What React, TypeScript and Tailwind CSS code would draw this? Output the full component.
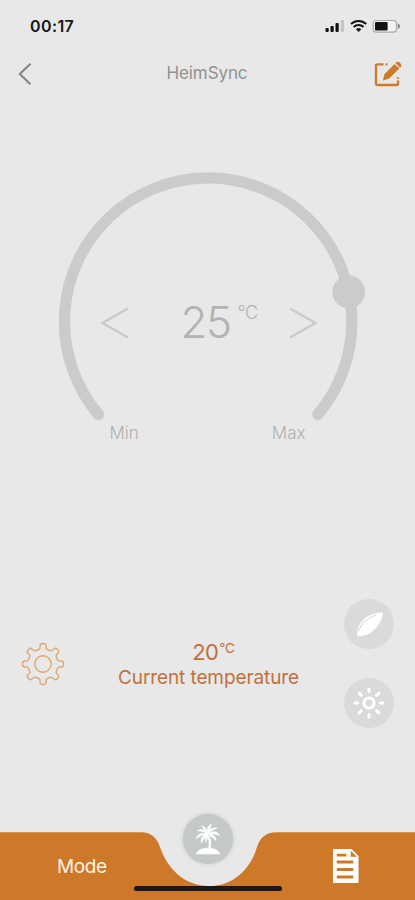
import type { ReactNode } from 'react'

const TEETH = 8

// closed outline through the midpoints of polar points, so every corner is rounded
function gearPath() {
  const pts: number[][] = []
  for (let i = 0; i < TEETH; i++) {
    const base = i * 45
    const corners = [[-15, 15.2], [-10, 16], [-8.5, 20.8], [8.5, 20.8], [10, 16], [15, 15.2]]
    corners.forEach(([a, r]) => {
      const t = ((base + a) * Math.PI) / 180
      pts.push([22 + r * Math.sin(t), 22 - r * Math.cos(t)])
    })
  }
  const mid = (a: number[], b: number[]) => `${((a[0] + b[0]) / 2).toFixed(2)} ${((a[1] + b[1]) / 2).toFixed(2)}`
  let d = `M${mid(pts[pts.length - 1], pts[0])}`
  pts.forEach((p, i) => {
    d += `Q${p[0].toFixed(2)} ${p[1].toFixed(2)} ${mid(p, pts[(i + 1) % pts.length])}`
  })
  return d + 'Z'
}

function StatusBar() {
  return (
    <div className="flex h-[52px] items-center justify-between pl-[30px] pr-[14px]">
      <span className="text-[16px] font-semibold tracking-[0.4px] text-[#171717]">00:17</span>
      <svg width="76" height="16" viewBox="0 0 76 16" className="block">
        <g fill="#111">
          <rect x="0.5" y="10" width="3.2" height="4" rx="1" />
          <rect x="5.5" y="8" width="3.2" height="6" rx="1" />
          <rect x="10.5" y="5" width="3.2" height="9" rx="1" />
          <rect x="15.7" y="2" width="3.2" height="12" rx="1" fill="#c4c4c4" />
        </g>
        <g fill="none" stroke="#111" strokeWidth="2.1">
          <path d="M26 6.1a11 11 0 0 1 15.2 0" />
          <path d="M28.7 9a7 7 0 0 1 9.8 0" />
        </g>
        <path d="M30.9 11.2a4 4 0 0 1 5.4 0L33.6 14z" fill="#111" />
        <rect x="48.2" y="2.5" width="23.3" height="11.6" rx="3" fill="#f3f3f3" stroke="#aaa" strokeWidth="1.2" />
        <rect x="50" y="4.1" width="12.6" height="8.4" rx="1.2" fill="#111" />
        <path d="M72.8 5.6v5.4c3-1 3-4.4 0-5.4z" fill="#888" />
      </svg>
    </div>
  )
}

function Header() {
  return (
    <header className="flex h-11 items-center justify-between pl-[18px] pr-[13px]">
      <button className="w-[22px]">
        <svg width="14" height="24" viewBox="0 0 14 24" fill="none" stroke="#858585" strokeWidth="2.1">
          <path d="M12.5 1.8L1.8 12l10.7 10.2" />
        </svg>
      </button>
      <h1 className="text-[17px] tracking-[-0.1px] text-[#929292]">HeimSync</h1>
      <button>
        <svg width="28" height="28" viewBox="0 0 28 28">
          <path d="M9.5 4.3H3.2A1.2 1.2 0 0 0 2 5.5v18.3A1.2 1.2 0 0 0 3.2 25h19.6a1.2 1.2 0 0 0 1.2-1.2V20.5M24 17.2v1.6M11.6 4.3h1.8" fill="none" stroke="#cf7928" strokeWidth="2.3" />
          <path d="M8.9 20.4l1.6-6.4L20.6 3.9l4.7 4.6L15.2 18.5z" fill="#cf7928" />
          <path d="M21.4 3.1l1.1-1.1c2-1.5 5.8 2 4.6 4.4l-1.1 1.3z" fill="#cf7928" />
        </svg>
      </button>
    </header>
  )
}

function Dial() {
  return (
    <section className="mt-[70px] grid justify-center">
      <svg width="324" height="256" viewBox="46 166 324 256" className="col-start-1 row-start-1 block">
        <path d="M98.5 414.5A143.7 143.7 0 1 1 317.8 414.5" fill="none" stroke="#cbcbcb" strokeWidth="11.3" strokeLinecap="round" />
        <circle cx="348.7" cy="292" r="16.4" fill="#cbcbcb" />
      </svg>
      <div className="col-start-1 row-start-1 flex items-start pl-[54px] pt-[134px]">
        <button className="mt-[6px]">
          <svg width="30" height="34" viewBox="0 0 30 34" fill="none" stroke="#cacaca" strokeWidth="2.4">
            <path d="M28 2.5L2.5 17L28 31.5" />
          </svg>
        </button>
        <div className="ml-[51px] flex w-[107px] items-start text-[#b3b3b3]">
          <span className="text-[44px] font-[350] leading-[44px] tracking-[-1.6px]">25</span>
          <span className="ml-[7px] mt-[3px] text-[18px] font-light leading-[20px] tracking-[-0.3px]">°C</span>
        </div>
        <button className="mt-[6px]">
          <svg width="30" height="34" viewBox="0 0 30 34" fill="none" stroke="#cacaca" strokeWidth="2.4">
            <path d="M2 2.5L27.5 17L2 31.5" />
          </svg>
        </button>
      </div>
      <div className="flex justify-between px-[64px] text-[17px] font-light leading-[22px] text-[#b0b0b0]">
        <span>Min</span>
        <span>Max</span>
      </div>
    </section>
  )
}

function RoundButton({ children }: { children: ReactNode }) {
  return <button className="flex size-[50px] items-center justify-center rounded-full bg-[#dadada]">{children}</button>
}

function Info() {
  return (
    <section className="mt-[155px] flex justify-between px-[21px]">
      <button className="mt-[43px] h-11">
        <svg width="44" height="44" viewBox="0 0 44 44" fill="none" stroke="#e0a56d" strokeWidth="1.4">
          <path d={gearPath()} />
          <circle cx="22" cy="22" r="8.2" />
        </svg>
      </button>
      <div className="ml-2 mt-10 flex w-[200px] flex-col items-center whitespace-nowrap text-[#c2703b]">
        <div className="flex items-start pl-[10px]">
          <span className="text-[22px] leading-[26px] tracking-[-0.7px]">20</span>
          <span className="ml-px text-[13.5px] leading-[18px] tracking-[-0.2px]">°C</span>
        </div>
        <p className="text-[19px] leading-[26px] tracking-[-0.1px]">Current temperature</p>
      </div>
      <div className="flex flex-col gap-[29px]">
        <RoundButton>
          <svg width="30" height="28" viewBox="0 0 30 28">
            <path d="M3.5 26.5C1.5 17 9 3 29 2.5C28.5 11 20 26.5 3.5 26.5z" fill="#fff" />
            <path d="M4.2 21.5C7 13.5 13 8 22 5" fill="none" stroke="#dadada" strokeWidth="1.1" />
          </svg>
        </RoundButton>
        <RoundButton>
          <svg width="34" height="34" viewBox="0 0 34 34" fill="none" stroke="#fff" strokeLinecap="round">
            <circle cx="17" cy="17" r="5" strokeWidth="3.2" />
            <path strokeWidth="3" d="M17 3v2.6M17 28.4V31M3 17h2.6M28.4 17H31M7.1 7.1l2.3 2.3M24.6 24.6l2.3 2.3M7.1 26.9l2.3-2.3M24.6 9.4l2.3-2.3" />
          </svg>
        </RoundButton>
      </div>
    </section>
  )
}

function Palm() {
  return (
    <svg width="26" height="32" viewBox="0 0 26 32" fill="#fff" stroke="#fff" strokeWidth="0.5">
      <path d="M1 31C3 26.5 8 25 13 25s10 1.5 12 6z" />
      <path d="M12.5 11C16 15 16.500 20 15.5 25.5h-2C14.700 20 14 15 11.5 12z" />
      <path d="M12.5 10.5C9 6 5 5.5 2.5 8c4-.5 6.5 1.2 10 2.5z" />
      <path d="M12.5 10.5C6 9.5 2 11 1.5 16c3-3.5 6-3.5 11-5.5z" />
      <path d="M12.5 10.5C7 13 5 16 6.5 20c1.5-4 4-5 6-9.5z" />
      <path d="M12.5 10.5C10.5 14 9.5 17 11 19.5c.8-3 2.300-5 1.5-9z" />
      <path d="M12.5 10.5C11.5 6 9.5 3 6.5 2.5c2 2.5 3 5.5 6 8z" />
      <path d="M12.5 10.5C11.5 6 13 2.5 16.5 1c-1.200 3-1.200 6-4 9.5z" />
      <path d="M12.5 10.5C15 5.5 19 3.5 22.5 5.5c-4 .2-6 3-10 5z" />
      <path d="M12.5 10.5C18 7.5 23 8.5 24.5 12.5c-3.5-2-7-1-12-2z" />
      <path d="M12.5 10.5C18 11 21.5 13.5 21 18c-2.5-3.5-5-4-8.5-7.5z" />
    </svg>
  )
}

function TabBar() {
  return (
    <nav className="mt-auto grid h-[90px]">
      <svg width="415" height="90" viewBox="0 810 415 90" className="col-start-1 row-start-1 block">
        <path d="M0 832.3H141C151 832.3 157 838 160 847C167 868 184 886 209 886C234 886 251 868 257 847C260 838 266 832.3 276 832.3H415V900H0z" fill="#ce7829" />
      </svg>
      <div className="col-start-1 row-start-1 flex items-start justify-between pl-[57px] pr-[55px]">
        <span className="mt-[44px] w-[76px] text-[19px] leading-[26px] tracking-[-0.4px] text-[#fff3e8]">Mode</span>
        <div className="flex w-[150px] flex-col items-center">
          <button className="mt-1 flex size-[50px] items-center justify-center rounded-full bg-[#c5c8c8] shadow-[0_0_4px_#c5c8c8]">
            <Palm />
          </button>
          <div className="mt-[22px] h-[5px] w-[148px] rounded-full bg-[#191820]" />
        </div>
        <div className="flex w-[77px] justify-end">
          <svg width="28" height="36" viewBox="0 0 28 36" className="mt-[38px]">
            <path d="M1 1h18.5l7 7v27H1z" fill="#fff" />
            <path d="M18.8 2.8l6 6h-6z" fill="#ce7829" />
            <path d="M4.8 7.2h9.5M4.8 14h16.5M4.8 21.5h16.5M4.8 29h16.5" stroke="#ce7829" strokeWidth="2.8" />
          </svg>
        </div>
      </div>
    </nav>
  )
}

export default function App() {
  return (
    <main className="flex h-[900px] w-[415px] flex-col overflow-hidden bg-[#e8e8e8] font-['Inter',sans-serif]">
      <StatusBar />
      <Header />
      <Dial />
      <Info />
      <TabBar />
    </main>
  )
}
